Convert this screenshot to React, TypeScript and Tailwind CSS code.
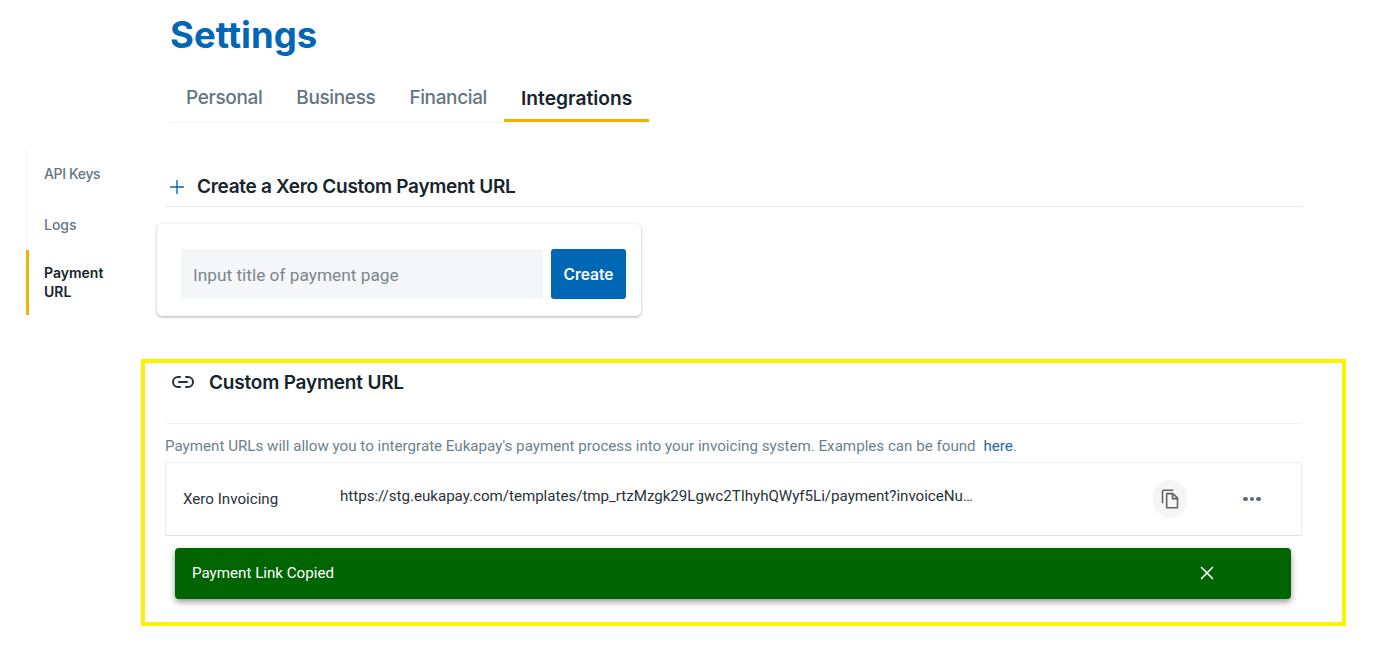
import React from "react";
import { Plus, Link2, X } from "lucide-react";

const heading = "font-['Inter',sans-serif]";
const body = "font-['Roboto',sans-serif]";

function CopyIcon() {
  return (
    <svg width="20" height="20" viewBox="0 0 24 24" fill="none" stroke="#5f6368" strokeWidth="1.9">
      <path d="M16 1.5H4.5A1.5 1.5 0 0 0 3 3v14" />
      <path d="M8 5.5h7.5L21 11v11.5H8z" strokeLinejoin="round" />
      <path d="M15 5.5V11.5h6" />
    </svg>
  );
}

function Tab({ label, active }: { label: string; active?: boolean }) {
  return (
    <div
      className={
        active
          ? "px-[17px] pt-[3px] h-[48px] flex items-center border-b-[3px] border-[#f0b400] text-[#16242c] text-[19.2px] font-semibold"
          : "px-[17px] h-[48px] flex items-center text-[#66757f] font-medium tracking-[-0.37px]"
      }
    >
      {label}
    </div>
  );
}

export default function App() {
  return (
    <div className={`w-[1376px] h-[645px] bg-white overflow-hidden ${heading}`}>
      <div className="pl-[169px]">
        <h1 className="pl-px pt-[13px] h-[73px] text-[36.5px] leading-[44px] font-bold text-[#0067b4]">Settings</h1>
        <div className="flex w-[480px] text-[19px] border-b border-[#f3f4f5] h-[50px] items-end">
          <Tab label="Personal" />
          <Tab label="Business" />
          <Tab label="Financial" />
          <Tab label="Integrations" active />
        </div>
      </div>

      <div className="flex mt-[25px] h-[186px]">
        <nav className="ml-[26px] w-[131px] h-[167px] border-l border-[#f3f4f5] text-[14px] text-[#66757f] font-medium">
          <div className="pl-[17px] h-[51px] pt-[16px] leading-[20px] tracking-[-0.35px]">API Keys</div>
          <div className="pl-[17px] h-[51px] pt-[16px] leading-[20px]">Logs</div>
          <div className="-ml-px pl-[15px] border-l-[3px] border-[#f0b400] h-[65px] pt-[13px] leading-[19px] text-[#16242c] font-semibold w-[100px]">
            Payment URL
          </div>
        </nav>
        <main className="w-[1146px]">
          <div className="ml-[8px] h-[59px] pt-[20px] flex items-center border-b border-[#e8eaec]">
            <Plus className="ml-[1px] text-[#0067b4]" size={22} strokeWidth={1.5} />
            <span className="ml-[9px] text-[19px] font-semibold text-[#16242c] tracking-[-0.3px]">Create a Xero Custom Payment URL</span>
          </div>
          <div className="mt-[17px] w-[484px] h-[92px] rounded-[5px] bg-white shadow-[0_1px_3px_rgba(0,0,0,0.32)] flex items-start pt-[25px] pl-[24px] gap-[8px]">
            <div className={`w-[362px] h-[50px] bg-[#f5f6f8] flex items-center pl-[12px] pt-[3px] text-[17.3px] text-[#7b8790] ${body}`}>
              Input title of payment page
            </div>
            <button className="w-[75px] h-[50px] pt-[2px] rounded-[3px] bg-[#0067b4] text-white text-[15.5px] font-semibold">Create</button>
          </div>
        </main>
      </div>

      <section className="ml-[141px] mt-[25px] w-[1205px] h-[267px] border-4 border-[#fff200] pl-[20px] pr-[40px]">
        <div className="h-[61px] border-b border-[#eef0f1] flex items-start pt-[6px]">
          <Link2 className="ml-[6px] mt-[1px] text-[#26323a]" size={24} strokeWidth={2} />
          <span className="ml-[14px] text-[19px] leading-[28px] font-semibold text-[#16242c] tracking-[-0.2px]">Custom Payment URL</span>
        </div>
        <p className={`h-[38px] pt-[12px] text-[15.15px] leading-[20px] text-[#6f7f8a] ${body}`}>
          Payment URLs will allow you to intergrate Eukapay's payment process into your invoicing system. Examples can be found <span className="ml-[4px] text-[#2468a8]">here</span>.
        </p>
        <div className={`h-[74px] border border-[#eceef0] border-b-[#dfe1e3] flex items-center text-[15.15px] text-[#2a3238] ${body}`}>
          <div className="ml-[17px] w-[157px]">Xero Invoicing</div>
          <div className="w-[633px] mb-[5px] whitespace-nowrap tracking-[-0.03px]">https://stg.eukapay.com/templates/tmp_rtzMzgk29Lgwc2TIhyhQWyf5Li/payment?invoiceNu…</div>
          <div className="ml-[180px] w-[34px] h-[38px] rounded-full bg-[#f5f5f5] flex items-center justify-center">
            <CopyIcon />
          </div>
          <div className="ml-[56px] flex gap-[2px]">
            <span className="w-[4.5px] h-[4.5px] rounded-full bg-[#5f6b75]" />
            <span className="w-[4.5px] h-[4.5px] rounded-full bg-[#5f6b75]" />
            <span className="w-[4.5px] h-[4.5px] rounded-full bg-[#5f6b75]" />
          </div>
        </div>
        <div className={`mt-[12px] ml-[10px] w-[1116px] h-[51px] rounded-[4px] bg-[#006400] shadow-[0_3px_6px_rgba(0,0,0,0.4)] flex items-center pl-[17px] text-[15.15px] text-white ${body}`}>
          <span>Payment Link Copied</span>
          <X className="ml-auto mr-[73px] mb-[1px] text-white" size={22} strokeWidth={1.8} />
        </div>
      </section>
    </div>
  );
}
